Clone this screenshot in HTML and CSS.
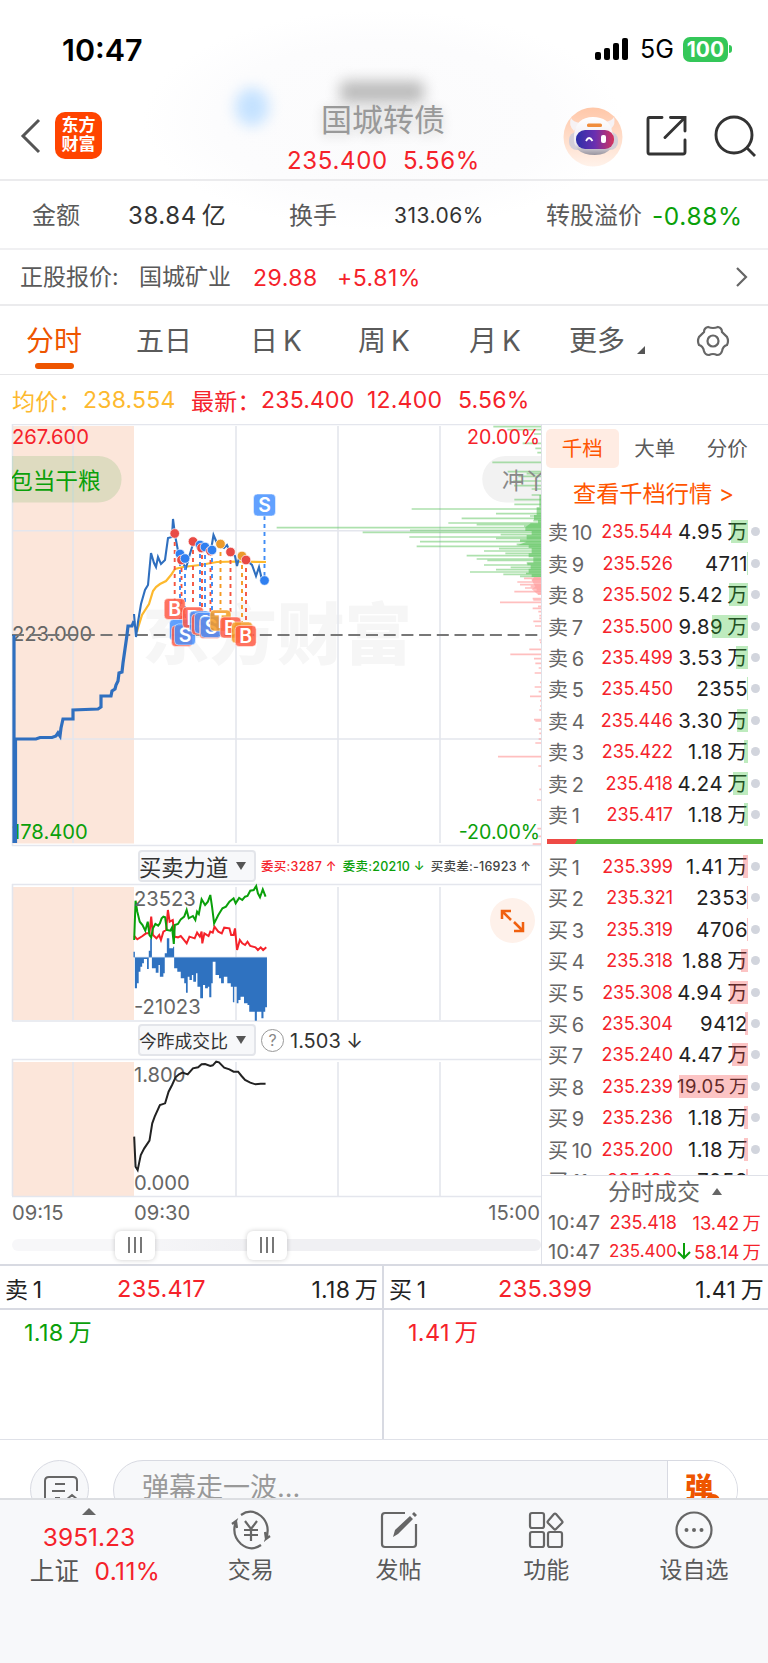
FILE: index.html
```html
<!DOCTYPE html>
<html lang="zh-CN">
<head>
    <meta charset="utf-8">
    <title>国城转债</title>
    <link rel="stylesheet" href="styles.css">
</head>
<body>
<div class="top">
    <div class="status">
        <span class="clock">10:47</span>
        <svg class="signal" width="34" height="22" viewBox="0 0 34 22">
            <rect x="0" y="14" width="6" height="8" rx="2"/>
            <rect x="9" y="10" width="6" height="12" rx="2"/>
            <rect x="18" y="5" width="6" height="17" rx="2"/>
            <rect x="27" y="0" width="6" height="22" rx="2"/>
        </svg>
        <span class="net">5G</span>
        <span class="battery">100</span>
        <span class="battery-tip"></span>
    </div>
    <div class="header">
        <svg class="back" width="22" height="36" viewBox="0 0 22 36"><path d="M19 2L3 18l16 16"/></svg>
        <div class="logo">东方<br>财富</div>
        <div class="title">
            <span class="blob blue"></span>
            <span class="blob gray"></span>
            <div class="name">国城转债</div>
            <div class="price red"><span>235.400</span><span>5.56%</span></div>
        </div>
        <svg class="robot" width="60" height="60" viewBox="0 0 60 60">
            <defs>
                <linearGradient id="peach" x1="0" y1="0" x2="0" y2="1"><stop offset="0" stop-color="#ffc7a8"/><stop offset="1" stop-color="#fff2ea"/></linearGradient>
                <linearGradient id="visor" x1="0" y1="0" x2="1" y2="0"><stop offset="0" stop-color="#2b2fa8"/><stop offset=".5" stop-color="#6a2fb0"/><stop offset="1" stop-color="#d5345c"/></linearGradient>
                <linearGradient id="shell" x1="0" y1="0" x2="0" y2="1"><stop offset="0" stop-color="#fff"/><stop offset=".7" stop-color="#eeeaf0"/><stop offset="1" stop-color="#98949e"/></linearGradient>
            </defs>
            <circle cx="30" cy="30" r="29.5" fill="url(#peach)"/>
            <path d="M11 24Q5 18 8 11Q10 15 17 16zM48 22Q53 17 51 10Q49 14 42 15z" fill="#f6f2f4"/>
            <rect x="6" y="25" width="49" height="18" rx="8" fill="#d3cfd8"/>
            <path d="M30 10Q46 10 49 24Q55 47 32 48Q9 48 11 28Q13 10 30 10z" fill="url(#shell)"/>
            <rect x="24" y="16.500" width="15" height="3.500" rx="1.500" fill="#f08d3c"/>
            <rect x="13" y="23" width="38" height="19" rx="9" fill="url(#visor)"/>
            <path d="M23 34q3-6 6.500 0" fill="none" stroke="#fff" stroke-width="1.800"/>
            <rect x="38" y="28" width="5" height="8" rx="2" fill="#fff"/>
        </svg>
        <svg class="share" width="42" height="42" viewBox="0 0 42 42"><path d="M17 2.500H4.500Q3 2.500 3 4.500V37Q3 39 4.500 39H38Q40 39 40 37V25M25.500 2.500H40V16M40 2.500L20 22.500" stroke-linecap="round"/></svg>
        <svg class="search" width="44" height="44" viewBox="0 0 44 44"><circle cx="21" cy="20" r="18"/><path d="M33 32l9 9"/></svg>
    </div>
    <div class="stats">
        <span class="lbl">金额</span><span class="num">38.84&thinsp;亿</span>
        <span class="lbl">换手</span><span class="num small">313.06%</span>
        <span class="lbl">转股溢价</span><span class="num green">-0.88%</span>
    </div>
    <div class="stock">
        <span>正股报价:</span><span>国城矿业</span>
        <span class="red">29.88</span><span class="red">+5.81%</span>
        <svg width="14" height="22" viewBox="0 0 14 22"><path d="M2 2l9 9l-9 9"/></svg>
    </div>
</div>
<div class="periods">
    <span class="active">分时</span><span>五日</span><span>日&thinsp;K</span><span>周&thinsp;K</span><span>月&thinsp;K</span>
    <span class="more">更多</span>
    <svg width="34" height="34" viewBox="0 0 34 34"><path d="M12 3Q17 5 22 3Q26 4 26 8L31 13Q33 17 31 21Q27 22 26 27Q25 31 21 31Q17 29 13 31Q9 31 8 27Q7 22 3 21Q1 17 3 13L8 8Q8 4 12 3z"/><circle cx="17" cy="17" r="5.500"/></svg>
</div>
<div class="quote">
    <span class="yellow">均价：</span><span class="yellow">238.554</span>
    <span>最新：</span><span>235.400</span><span>12.400</span><span>5.56%</span>
</div>
<div class="main">
    <div class="charts">
        <svg class="chart" width="541" height="424" viewBox="0 424 541 424">
            <rect x="12" y="426" width="122" height="417.500" fill="#fce6da"/>
            <text class="watermark" x="142" y="659">东方财富</text>
            <path class="grid" d="M12 424.500H542M12 845.500H542M12 530.700H542M12 739H542M12.500 424V846M73 426V843M236 426V843M338 426V843M440 426V843"/>
            <path d="M12 456H98.300a23.200 23.200 0 0 1 0 46.500H12z" fill="#0a8a0a" fill-opacity=".12"/>
            <path d="M542 456H505.500a23.200 23.200 0 0 0 0 46.500H542z" fill="#f2f2f2"/>
            <!-- order depth -->
            <g transform="translate(260 420) scale(.33333)">
                <path class="ask" d="M845 20H700M845 29H742M845 42H822M845 70H788M845 85H826M845 98H832M845 127H697M845 155H743M845 161H800M845 169H775M845 183H760M845 197H762M845 207H815M845 225H815M845 239H763M845 253H763M845 267H455M845 281H708M845 288H810M845 295H605M845 302H820M845 309H565M845 314H650M845 319H792M845 323H50M845 331H450M845 337H308M845 344H722M845 351H448M845 355H708M845 365H480M845 373H770M845 379H470M845 386H717M845 393H672M845 400H736M845 407H620M845 417H650M845 421H682M845 429H800M845 435H672M845 442H752M845 449H708M845 456H630M845 463H730M845 469H780"/>
                <path d="M845 225H838V262H830V285H822V300H834V310H812L796 322V333H815V345H800V358H780V365H800L772 376H806V384H815V400H806V412H820V428H802V436H812V446H806V458H798V463H815V471H845z" fill="#5cc35c" fill-opacity=".62"/>
                <path class="bid" d="M845 475H792M845 480H815M845 486H772M845 494H780M845 499H812M845 504H795M845 509H830M845 515H763M845 522H834M845 536H818M845 540H820M845 547H720M845 559H834M845 565H818M845 575H835M845 587H838M845 595H838M845 604H820M845 618H825M845 660H838M845 667H840M845 688H808M845 703H751M845 716H822M845 730H826M845 744H836M845 759H824M845 787H840M845 801H824M845 815H836M845 829H810M845 842H840M845 858H840M845 870H838M845 899H822M845 903H826M845 927H836M845 940H838M845 957H836M845 969H826M845 1010H714M845 1038H835M845 1108H838M845 1140H831M845 1226H832M845 1249H835M845 1272H818"/>
                <path d="M845 471H822L816 482L826 500L815 507L834 524H845z" fill="#ff9a9a" fill-opacity=".6"/>
            </g>
            <text class="axis up" x="12" y="444">267.600</text>
            <text class="axis up end" x="540" y="444">20.00%</text>
            <text class="axis down" x="12" y="838.500">178.400</text>
            <text class="axis down end" x="540" y="838.500">-20.00%</text>
            <text class="axis" x="12" y="641">223.000</text>
            <svg x="12" y="450" width="530" height="60" viewBox="12 450 530 60">
                <text class="danmu down" x="10" y="489">包当干粮</text>
                <text class="danmu" x="502" y="489">冲丫</text>
            </svg>
            <path d="M12 635H542" stroke="#777" stroke-width="2" stroke-dasharray="12 5.700"/>
            <path class="avg" d="M137 632L138 628L142 615L149 604L153 591L156 587L160 584L166 581L171 575L175 569L183 567L200 565L217 562L236 561.500L266 562"/>
            <path class="line thick" d="M14 635V843M15.500 739V843M15 739H36L40 737.500H52L56 736L58 733L60 736L61 728L63 719H73V710L98 709L101 707V696H111L112 691L115 689L116 685L118 681L119 673L122 672L123 663L125 649L127 635L128 626H132L134 621"/>
            <path class="line" d="M134 614L136 637L138 622L141 604L145 590L148 585L151 553L154 563L156 567L158 557L161 564L165 560L168 538L172 537L173 519L175 535L179 556L182 562L186 568L189 557L193 544L200 546L205 548L211 550L213.500 535L217 543L224 548L227 545L230 552L235 556L237 566L240 554L246 560L252 565L256 576L259 567L262 580L264 581"/>
            <g class="drop">
                <path class="b" d="M174.700 534V600M181.500 560V626M193 542V606M202 547V612M210.500 552V616M230.500 552V616M246 560V624"/>
                <path class="s" d="M180 554V620M185 558V624M200 546V612M205 547V612M212 550V616M264.500 516V580"/>
                <path class="t" d="M220.500 544V610M242 557V622"/>
            </g>
            <g class="dots">
                <circle class="b" cx="174.700" cy="533.500" r="4.800"/><circle class="s" cx="180" cy="554" r="4.800"/><circle class="b" cx="181.500" cy="560" r="4.800"/><circle class="s" cx="185" cy="558.500" r="4.800"/><circle class="b" cx="193" cy="541.500" r="4.800"/><circle class="s" cx="200" cy="545" r="4.800"/><circle class="b" cx="201.500" cy="548" r="4.800"/><circle class="s" cx="205" cy="547" r="4.800"/><circle class="b" cx="210.500" cy="551" r="4.800"/><circle class="s" cx="212" cy="550" r="4.800"/><circle class="t" cx="220.500" cy="544" r="4.800"/><circle class="b" cx="230.500" cy="552" r="4.800"/><circle class="t" cx="242" cy="556" r="4.800"/><circle class="b" cx="246" cy="560" r="4.800"/><circle class="s" cx="264.500" cy="580.500" r="4.800"/>
            </g>
            <g class="badges">
                <g transform="translate(264.500 505)"><rect class="s" x="-11" y="-11" width="22" height="22" rx="4"/><text y="7">S</text></g>
                <g transform="translate(174.700 609)"><rect class="b" x="-10.500" y="-10.500" width="21" height="21" rx="4"/><text y="7">B</text></g>
                <g transform="translate(180 630)"><rect class="s" x="-10.500" y="-10.500" width="21" height="21" rx="4"/></g>
                <g transform="translate(182 636)"><rect class="b" x="-10.500" y="-10.500" width="21" height="21" rx="4"/></g>
                <g transform="translate(185 634.500)"><rect class="s" x="-10.500" y="-10.500" width="21" height="21" rx="4"/><text y="7">S</text></g>
                <g transform="translate(193 617.500)"><rect class="b" x="-10.500" y="-10.500" width="21" height="21" rx="4"/><text y="7">B</text></g>
                <g transform="translate(200 621.500)"><rect class="s" x="-10.500" y="-10.500" width="21" height="21" rx="4"/><text y="7">S</text></g>
                <g transform="translate(202 624.500)"><rect class="b" x="-10.500" y="-10.500" width="21" height="21" rx="4"/></g>
                <g transform="translate(205 623)"><rect class="s" x="-10.500" y="-10.500" width="21" height="21" rx="4"/><text y="7">S</text></g>
                <g transform="translate(210 628)"><rect class="b" x="-10.500" y="-10.500" width="21" height="21" rx="4"/></g>
                <g transform="translate(211 627)"><rect class="s" x="-10.500" y="-10.500" width="21" height="21" rx="4"/><text y="7">S</text></g>
                <g transform="translate(220.500 620.500)"><rect class="t" x="-10.500" y="-10.500" width="21" height="21" rx="4"/><text y="7">T</text></g>
                <g transform="translate(230.500 627.500)"><rect class="b" x="-10.500" y="-10.500" width="21" height="21" rx="4"/><text y="7">B</text></g>
                <g transform="translate(242 632.500)"><rect class="t" x="-10.500" y="-10.500" width="21" height="21" rx="4"/></g>
                <g transform="translate(245.700 636)"><rect class="b" x="-10.500" y="-10.500" width="21" height="21" rx="4"/><text y="7">B</text></g>
            </g>
        </svg>
        <div class="tool">
            <span class="select">买卖力道<i></i></span>
            <span class="legend"><span class="red">委买:3287 ↑</span><span class="green">委卖:20210 ↓</span><span>买卖差:-16923 ↑</span></span>
        </div>
        <svg class="chart" width="541" height="139" viewBox="0 883 541 139">
            <rect x="12" y="887" width="122" height="133" fill="#fce6da"/>
            <path class="grid" d="M12 884.500H542M12 1021H542M12.500 884V1021M73 887V1020M236 887V1020M338 887V1020M440 887V1020"/>
            <g transform="translate(0 840) scale(.3476 .33333)">
                <path fill="#2f72c0" d="M384 352V335H388V445H394V430H399V395H404V380H409V370H414V357H423V387H428V332H432V295H437V385H448V398H456V375H460V410H470V400H474V340H480V295H487V325H498V320H501V385H510V395H520V415H530V430H535V458H540V410H545V420H552V405H556V425H564V400H568V440H576V475H584V435H590V445H598V440H602V472H608V430H612V365H620V405H630V415H636V430H644V410H654V430H664V440H670V487H674V440H681V490H686V480H692V470H702V490H712V495H717V515H733V542H739V515H752V535H758V515H763V502H768V352z"/>
                <path d="M386 352H768" stroke="#8fb3dc" stroke-width="2"/>
                <path class="up-line" d="M386 288L395 298L410 288L420 280L430 280L435 230L440 285L450 295L458 285L463 300L470 275L478 270L483 210L488 245L497 240L502 290L512 292L520 288L528 298L537 310L545 290L560 295L567 278L575 290L580 275L582 310L588 280L600 288L605 275L612 278L617 260L628 275L638 280L645 263L660 265L665 285L672 285L676 265L682 330L690 300L697 310L705 315L712 305L720 318L735 322L742 330L750 322L757 330L766 322"/>
                <path class="down-line" d="M386 300L390 182L395 215L402 245L410 255L418 272L425 245L430 285L435 292L440 265L447 252L455 257L460 250L465 235L470 230L475 232L480 270L490 272L495 262L500 312L503 255L512 252L520 238L530 230L537 210L543 235L555 228L562 240L567 215L572 222L580 178L590 195L598 185L605 165L610 200L616 250L628 225L640 205L650 200L660 185L672 175L678 190L688 174L697 180L705 170L712 168L720 152L730 150L737 138L742 160L748 172L756 148L764 170"/>
            </g>
            <text class="axis" x="134" y="906">23523</text>
            <text class="axis" x="134" y="1014">-21023</text>
            <circle cx="512.500" cy="920.500" r="22.500" fill="#fef1ea"/>
            <path d="M502 919V911H511M503 912L511 920M514 931H523V922M522 930L514 922" fill="none" stroke="#f0600f" stroke-width="2.500"/>
        </svg>
        <div class="tool low">
            <span class="select narrow">今昨成交比<i></i></span>
            <span class="help">?</span><span class="ratio">1.503 ↓</span>
        </div>
        <svg class="chart" width="541" height="140" viewBox="0 1058 541 140">
            <rect x="12" y="1062" width="122" height="134" fill="#fce6da"/>
            <path class="grid" d="M12 1059.500H542M12 1196.500H542M12.500 1059V1196M73 1062V1196M236 1062V1196M338 1062V1196M440 1062V1196"/>
            <text class="axis" x="134" y="1081.500">1.800</text>
            <text class="axis" x="134" y="1189.500">0.000</text>
            <g transform="translate(0 1020) scale(.3476 .33333)">
                <path class="black-line" d="M386 350L390 440L396 450L400 430L405 405L415 385L430 362L438 310L445 290L460 255L475 250L485 215L495 195L505 172L515 163L525 158L540 163L555 145L570 142L580 133L590 132L605 138L612 136L622 125L630 127L645 143L660 148L672 155L685 155L695 168L705 180L720 188L735 193L750 191L764 191"/>
            </g>
        </svg>
        <div class="times"><span>09:15</span><span>09:30</span><span class="last">15:00</span></div>
        <div class="slider"><div class="track"></div><b></b><b></b></div>
    </div>
    <div class="book">
        <div class="book-tabs"><span class="on">千档</span><span>大单</span><span>分价</span></div>
        <div class="book-link">查看千档行情 &gt;</div>
        <div class="rows sell">
            <div class="row"><span>卖&thinsp;10</span><em>235.544</em><b>4.95&thinsp;万<i style="width:17px"></i></b></div>
            <div class="row"><span>卖&thinsp;9</span><em>235.526</em><b>4711<i style="width:1px"></i></b></div>
            <div class="row"><span>卖&thinsp;8</span><em>235.502</em><b>5.42&thinsp;万<i style="width:19px"></i></b></div>
            <div class="row"><span>卖&thinsp;7</span><em>235.500</em><b>9.89&thinsp;万<i style="width:36px"></i></b></div>
            <div class="row"><span>卖&thinsp;6</span><em>235.499</em><b>3.53&thinsp;万<i style="width:12px"></i></b></div>
            <div class="row"><span>卖&thinsp;5</span><em>235.450</em><b>2355<i style="width:1px"></i></b></div>
            <div class="row"><span>卖&thinsp;4</span><em>235.446</em><b>3.30&thinsp;万<i style="width:11px"></i></b></div>
            <div class="row"><span>卖&thinsp;3</span><em>235.422</em><b>1.18&thinsp;万<i style="width:4px"></i></b></div>
            <div class="row"><span>卖&thinsp;2</span><em>235.418</em><b>4.24&thinsp;万<i style="width:15px"></i></b></div>
            <div class="row"><span>卖&thinsp;1</span><em>235.417</em><b>1.18&thinsp;万<i style="width:4px"></i></b></div>
        </div>
        <div class="ratio-bar"></div>
        <div class="rows buy">
            <div class="row"><span>买&thinsp;1</span><em>235.399</em><b>1.41&thinsp;万<i style="width:5px"></i></b></div>
            <div class="row"><span>买&thinsp;2</span><em>235.321</em><b>2353<i style="width:1px"></i></b></div>
            <div class="row"><span>买&thinsp;3</span><em>235.319</em><b>4706<i style="width:1px"></i></b></div>
            <div class="row"><span>买&thinsp;4</span><em>235.318</em><b>1.88&thinsp;万<i style="width:7px"></i></b></div>
            <div class="row"><span>买&thinsp;5</span><em>235.308</em><b>4.94&thinsp;万<i style="width:18px"></i></b></div>
            <div class="row"><span>买&thinsp;6</span><em>235.304</em><b>9412<i style="width:3px"></i></b></div>
            <div class="row"><span>买&thinsp;7</span><em>235.240</em><b>4.47&thinsp;万<i style="width:16px"></i></b></div>
            <div class="row"><span>买&thinsp;8</span><em>235.239</em><b class="wide">19.05&thinsp;万<i style="width:69px"></i></b></div>
            <div class="row"><span>买&thinsp;9</span><em>235.236</em><b>1.18&thinsp;万<i style="width:4px"></i></b></div>
            <div class="row"><span>买&thinsp;10</span><em>235.200</em><b>1.18&thinsp;万<i style="width:4px"></i></b></div>
            <div class="row"><span>买&thinsp;11</span><em>235.190</em><b>7058<i style="width:2px"></i></b></div>
        </div>
        <div class="deals">
            <div class="deals-title">分时成交 <i></i></div>
            <div class="deal"><span>10:47</span><em>235.418</em><b>13.42&thinsp;万</b></div>
            <div class="deal"><span>10:47</span><em class="tight">235.400</em><svg width="14" height="18" viewBox="0 0 14 18"><path d="M7 1V16M1 10L7 16L13 10"/></svg><b>58.14&thinsp;万</b></div>
        </div>
    </div>
</div>
<div class="level">
    <div class="side">
        <div class="side-head"><span>卖&thinsp;1</span><em>235.417</em><span>1.18&thinsp;万</span></div>
        <div class="side-body green">1.18&thinsp;万</div>
    </div>
    <div class="side">
        <div class="side-head"><span>买&thinsp;1</span><em>235.399</em><span>1.41&thinsp;万</span></div>
        <div class="side-body red">1.41&thinsp;万</div>
    </div>
</div>
<div class="comment">
    <div class="round">
        <svg width="36" height="40" viewBox="0 0 36 40"><path d="M34 16V6Q34 2 30 2H6Q2 2 2 6V34H14M12 9H22M9 16H22M12 23H17M23 30V25L29 20L35 25V30"/><circle cx="29" cy="27" r="2.500"/></svg>
    </div>
    <div class="input"><span>弹幕走一波...</span><div class="send">弹<i></i></div></div>
</div>
<div class="nav">
    <div class="index red">
        <i></i>
        <div>3951.23</div>
        <div class="index-row"><span>上证</span>0.11%</div>
    </div>
    <div class="item">
        <svg width="44" height="40" viewBox="0 0 44 40"><path d="M12 5Q22-2 32 6Q42 15 37 29L41 26M37 29L36 22M32 35Q22 42 12 34Q2 25 7 11L3 14M7 11L8 18M16 11L22 19L28 11M22 19V31M15 20H29M15 25H29"/></svg>
        交易
    </div>
    <div class="item">
        <svg width="44" height="40" viewBox="0 0 44 40"><path d="M28 3H8Q5 3 5 6V34Q5 37 8 37H36Q39 37 39 34V14"/><path class="pen" d="M16 27L18 20L33 6L36 9L21 24zM35 4L37 2L40 5L38 7z"/></svg>
        发帖
    </div>
    <div class="item">
        <svg width="44" height="40" viewBox="0 0 44 40"><rect x="6" y="3" width="14" height="15" rx="2"/><rect x="6" y="22" width="14" height="15" rx="2"/><rect x="24" y="22" width="14" height="15" rx="2"/><path d="M30 4Q31 3 32 4L38 11Q39 12 38 13L32 19Q31 20 30 19L24 13Q23 12 24 11z"/></svg>
        功能
    </div>
    <div class="item">
        <svg width="44" height="40" viewBox="0 0 44 40"><circle cx="22" cy="20" r="17.500"/><path class="pen" d="M12.500 20a2 2 0 1 0 4 0a2 2 0 1 0-4 0M20 20a2 2 0 1 0 4 0a2 2 0 1 0-4 0M27.500 20a2 2 0 1 0 4 0a2 2 0 1 0-4 0"/></svg>
        设自选
    </div>
</div>
</body>
</html>
```
FILE: styles.css
```css
* {
box-sizing: border-box;
}
body {
margin: 0;
width: 768px;
height: 1663px;
overflow: hidden;
background: #fff;
color: #5a5a5a;
font-family: Inter, "Noto Sans CJK SC", sans-serif;
font-size: 23px;
white-space: nowrap;
}
em, i, b {
font-style: normal;
font-weight: normal;
}
svg {
display: block;
fill: none;
}
.red {
color: #f5222a;
}
.green {
color: #0aa00a;
}
.yellow {
color: #fdb92e;
}

/* status bar and header */
.top {
background: radial-gradient(ellipse 240px 110px at 383px 120px, #fbfbfc 0, #fcfcfd 70%, #fff 100%);
}
.status {
display: flex;
align-items: center;
height: 98px;
padding-left: 62px;
color: #000;
}
.clock {
width: 533px;
font-size: 30.5px;
font-weight: 600;
}
.signal {
fill: #000;
}
.net {
width: 43px;
margin-left: 11px;
font-size: 25px;
}
.battery {
width: 45px;
height: 25px;
border-radius: 7px;
background: #34c759;
color: #fff;
font-size: 21px;
font-weight: 700;
line-height: 25px;
text-align: center;
}
.battery-tip {
width: 3px;
height: 8px;
margin-left: 1px;
border-radius: 0 3px 3px 0;
background: #34c759;
}
.header {
display: flex;
height: 83px;
padding-left: 20px;
border-bottom: 2px solid #ebebed;
}
.back {
margin-top: 20px;
stroke: #555;
stroke-width: 3;
}
.logo {
width: 47px;
height: 47px;
margin: 14px 0 0 13px;
padding-top: 4px;
border-radius: 10px;
background: #ff4400;
color: #fff;
font-size: 17px;
font-weight: 700;
line-height: 19px;
text-align: center;
}
.title {
position: relative;
width: 461px;
padding-left: 101px;
text-align: center;
}
.name {
position: relative;
width: 360px;
padding-top: 2px;
color: #999;
font-size: 31px;
line-height: 40px;
text-shadow: 0 2px 12px #ccc;
}
.price {
display: flex;
position: relative;
justify-content: center;
gap: 15px;
width: 361px;
font-size: 24px;
line-height: 42px;
letter-spacing: .7px;
}
.blob {
position: absolute;
border-radius: 50%;
}
.blue {
left: 133px;
top: -10px;
width: 34px;
height: 38px;
background: #c5e2ff;
filter: blur(7px);
}
.gray {
left: 238px;
top: -17px;
width: 84px;
height: 22px;
border-radius: 6px;
background: #bbb;
filter: blur(7px);
}
.robot {
margin-top: 9px;
}
.share, .search {
margin: 17px 0 0 22px;
stroke: #333;
stroke-width: 2.9;
}
.search {
margin-left: 26px;
}
.stats {
display: grid;
grid-template-columns: 96px 161px 105px 152px 106px 1fr;
align-items: center;
height: 69px;
padding: 2px 0 0 32px;
border-bottom: 2px solid #f0f0f2;
line-height: 30px;
}
.lbl {
font-size: 24px;
}
.num {
color: #333;
font-size: 24px;
letter-spacing: .6px;
}
.num.small {
font-size: 21px;
letter-spacing: .5px;
}
.num.green {
color: #0aa00a;
font-size: 24.5px;
}
.stock {
display: grid;
grid-template-columns: 119px 114px 84px 398px 20px;
align-items: center;
height: 56px;
padding-left: 20px;
border-bottom: 2px solid #ebebed;
line-height: 30px;
}
.stock .red {
padding-top: 1px;
letter-spacing: .5px;
}
.stock svg, .periods svg {
stroke: #666;
stroke-width: 2.2;
}

/* chart period tabs */
.periods {
display: grid;
grid-template-columns: 110px 114px 108px 111px 100px 127px 40px;
align-items: center;
height: 69px;
padding: 2px 0 0 26px;
border-bottom: 1px solid #e6e6e8;
font-size: 28px;
line-height: 40px;
}
.periods .active {
position: relative;
color: #ee5500;
}
.active::after {
content: "";
position: absolute;
left: 9px;
bottom: -8px;
width: 39px;
height: 6px;
border-radius: 3px;
background: #ee5500;
}
.more {
position: relative;
}
.more::after {
content: "";
position: absolute;
left: 68px;
bottom: 7px;
border-left: 8px solid transparent;
border-bottom: 8px solid #555;
}
.quote {
display: grid;
grid-template-columns: 71px 108px 70px 106px 91px 90px;
align-items: center;
height: 49px;
padding: 1px 0 0 12px;
color: #f5222a;
font-size: 23px;
letter-spacing: .2px;
}

/* charts */
.main {
display: flex;
height: 842px;
border-bottom: 2px solid #d8dae2;
}
.charts {
width: 542px;
border-right: 1px solid #dfe1e8;
}
.grid {
stroke: #e4e6ed;
stroke-width: 1.6;
}
.watermark {
fill: #f6f6f6;
font-size: 67.5px;
font-weight: 900;
}
.axis {
fill: #666;
font-size: 20.2px;
}
.end {
font-size: 19.6px;
text-anchor: end;
}
.up {
fill: #f5222a;
}
.down {
fill: #0aa00a;
}
.danmu {
fill: #888;
font-size: 22.7px;
}
.danmu.down {
fill: #0aa00a;
}
.ask {
stroke: #5cc35c;
stroke-opacity: .5;
stroke-width: 5;
}
.bid {
stroke: #ff8080;
stroke-opacity: .5;
stroke-width: 5;
}
.line {
stroke: #2f6fbf;
stroke-width: 2.1;
}
.thick {
stroke-width: 3.2;
}
.avg {
stroke: #fdb92e;
stroke-width: 2.2;
}
.up-line, .down-line, .black-line {
stroke: #f5222a;
stroke-width: 2;
vector-effect: non-scaling-stroke;
}
.down-line {
stroke: #0aa00a;
}
.black-line {
stroke: #222;
}
.drop path {
stroke-width: 1.9;
stroke-dasharray: 4 4;
}
.drop .b {
stroke: #f5553f;
}
.drop .s {
stroke: #3f8cf5;
}
.drop .t {
stroke: #f59a23;
}
.dots circle {
stroke: #fff;
stroke-width: .7;
}
.dots .b {
fill: #e84a45;
}
.dots .s {
fill: #2f7ff0;
}
.dots .t {
fill: #ec9a2c;
}
.badges rect {
stroke: #fff;
stroke-opacity: .5;
stroke-width: 1;
fill-opacity: .85;
}
.badges .b {
fill: #ff5a45;
}
.badges .s {
fill: #4590ff;
}
.badges .t {
fill: #f59a23;
}
.badges text {
fill: #fff;
font-size: 19.5px;
font-weight: 600;
text-anchor: middle;
}
.tool {
display: flex;
align-items: center;
height: 35px;
padding-left: 138px;
}
.tool.low {
height: 36px;
}
.select {
display: flex;
flex: none;
align-items: center;
width: 118px;
height: 32px;
border: 2px solid #e3e5ea;
border-radius: 4px;
background: #f7f8fa;
color: #333;
font-size: 22.3px;
text-indent: -1px;
}
.narrow {
font-size: 17.8px;
}
.select i {
margin-left: 8px;
border: 5px solid transparent;
border-top: 8px solid #555;
border-bottom: 0;
}
.legend {
display: flex;
gap: 6px;
margin-left: 5px;
color: #444;
font-size: 12.5px;
font-weight: 500;
letter-spacing: .25px;
}
.help {
width: 23px;
height: 23px;
margin: 0 6px 0 5px;
border: 1.5px solid #999;
border-radius: 50%;
color: #888;
font-size: 16px;
line-height: 21px;
text-align: center;
}
.ratio {
padding-top: 1px;
color: #333;
font-size: 20px;
}
.times {
display: grid;
grid-template-columns: 122px 1fr auto;
padding: 3px 1px 0 12px;
height: 33px;
color: #666;
font-size: 20.2px;
line-height: 24px;
}
.slider {
display: flex;
align-items: center;
gap: 92px;
position: relative;
height: 28px;
padding-left: 115px;
}
.track {
position: absolute;
left: 12px;
width: 529px;
height: 12px;
border-radius: 6px;
background: linear-gradient(90deg, #f7f7f9 20%, #f0f0f3 48%);
}
.slider b {
position: relative;
width: 40px;
height: 29px;
border-radius: 6px;
background: linear-gradient(90deg, #777 2px, transparent 2px 6px, #777 6px 8px, transparent 8px 12px, #777 12px) center / 14px 16px no-repeat #fff;
box-shadow: 0 0 5px rgba(0,0,0,.2);
}

/* order book */
.book {
width: 226px;
}
.book-tabs {
display: flex;
padding: 4px 0 0 4px;
border-top: 1px solid #e4e6ed;
font-size: 20.5px;
line-height: 39px;
text-align: center;
}
.book-tabs span {
width: 72.5px;
}
.book-tabs .on {
border-radius: 5px;
background: #ffece3;
color: #ff5500;
}
.book-link {
height: 48px;
padding: 2px 0 0 31px;
color: #ff5500;
font-size: 23.2px;
line-height: 48px;
}
.row {
display: grid;
grid-template-columns: 45px 80px 75px 18px;
align-items: center;
height: 31.46px;
padding-left: 6px;
color: #666;
font-size: 20px;
}
.row em, .deal em {
color: #f5222a;
font-size: 18px;
text-align: right;
}
.row b {
position: relative;
color: #222;
font-size: 20.3px;
letter-spacing: .5px;
text-align: right;
line-height: 23px;
}
.row .wide {
margin-left: -4px;
font-size: 18.5px;
letter-spacing: .4px;
}
.row i {
position: absolute;
right: 0;
top: 0;
height: 23px;
background: rgba(40,190,40,.3);
}
.buy .row i {
background: rgba(245,60,60,.3);
}
.row::after {
content: "";
width: 9px;
height: 9px;
margin-left: 3px;
border-radius: 50%;
background: #d2d5dd;
}
.ratio-bar {
width: 216px;
height: 5px;
margin: 8px 0 6px 5px;
background: linear-gradient(120deg, #ee4a45 14%, #58b940 14%);
}
.buy {
height: 325px;
padding-top: 1px;
overflow: hidden;
}
.deals {
border-top: 1px solid #dfe1e8;
}
.deals-title {
padding-left: 66px;
font-size: 23px;
line-height: 32px;
color: #666;
}
.deals-title i {
display: inline-block;
margin: 0 0 5px 6px;
border: 5px solid transparent;
border-bottom: 7px solid #666;
border-top: 0;
}
.deal {
display: grid;
grid-template-columns: 58px 71px 14px 70px;
align-items: center;
height: 29px;
padding-left: 6px;
color: #666;
font-size: 20.5px;
}
.deal .tight {
font-size: 17px;
}
.deal b {
grid-column: 4;
color: #f5222a;
font-size: 18.4px;
text-align: right;
}
.deal svg {
stroke: #0aa00a;
stroke-width: 2;
}

/* best ask and bid */
.level {
display: flex;
height: 174px;
border-bottom: 1px solid #dfe1e8;
font-size: 23px;
}
.side {
width: 382px;
}
.side + .side {
width: 386px;
border-left: 2px solid #d8dae2;
}
.side-head {
display: grid;
grid-template-columns: 112px 1fr auto;
align-items: center;
height: 44px;
padding: 2px 4px 0 5px;
border-bottom: 2px solid #d8dae2;
color: #222;
letter-spacing: .3px;
}
.side + .side .side-head {
grid-template-columns: 109px 1fr auto;
}
.side-head em {
color: #f5222a;
font-size: 23.5px;
}
.side-body {
padding: 7px 24px;
font-size: 23.5px;
line-height: 32px;
letter-spacing: .3px;
}

/* comment input */
.comment {
display: flex;
gap: 24px;
height: 58px;
padding: 20px 0 0 30px;
overflow: hidden;
}
.round {
flex: none;
width: 59px;
height: 59px;
padding: 14px 0 0 12px;
border: 1px solid #d8dae2;
border-radius: 50%;
background: #f7f8fa;
}
.round svg {
stroke: #666;
stroke-width: 2;
}
.input {
display: flex;
justify-content: space-between;
width: 625px;
height: 60px;
border: 1px solid #d8dae2;
border-radius: 30px;
background: #f7f8fa;
overflow: hidden;
color: #999;
font-size: 27px;
line-height: 53px;
}
.input span {
padding-left: 28px;
}
.send {
position: relative;
width: 70px;
padding-left: 17px;
border-left: 1px solid #d8dae2;
background: #fff;
color: #ee5500;
font-size: 28px;
font-weight: 900;
line-height: 54px;
}
.send i {
position: absolute;
left: 38px;
top: 33px;
width: 14px;
height: 14px;
border-radius: 50%;
background: #ee5500;
}

/* bottom bar */
.nav {
display: flex;
height: 167px;
padding: 8px 0 0 15px;
border-top: 2px solid #dcdee2;
background: #f7f8fa;
}
.index {
width: 162px;
padding-right: 14px;
font-size: 24.5px;
line-height: 34px;
text-align: center;
}
.index i {
display: block;
width: 0;
margin: 0 auto 5px;
border: 7px solid transparent;
border-top: 0;
border-bottom: 7px solid #666;
}
.index-row {
margin: 0 -6px 0 6px;
letter-spacing: .4px;
}
.index-row span {
margin-right: 15px;
color: #555;
}
.item {
width: 147.700px;
text-align: center;
font-size: 23px;
line-height: 40px;
}
.item svg {
margin: 2px auto 0;
stroke: #666;
stroke-width: 2.2;
}
.item .pen {
fill: #666;
stroke: none;
}
```
